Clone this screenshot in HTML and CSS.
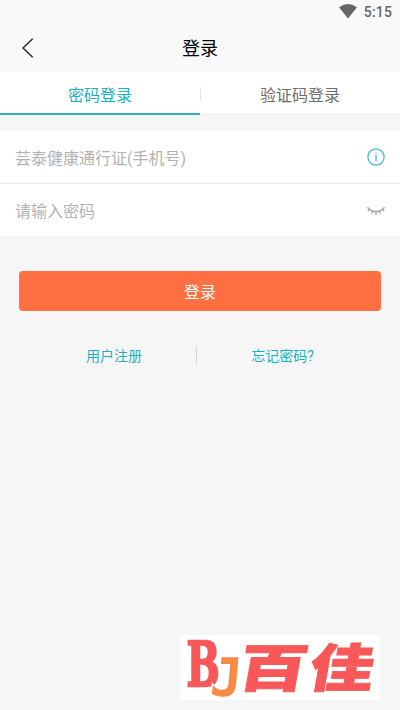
FILE: index.html
```html
<!DOCTYPE html>
<html lang="zh-CN">
<head>
<meta charset="utf-8">
<meta name="viewport" content="width=device-width, initial-scale=1">
<title>登录</title>
<link rel="stylesheet" href="styles.css">
</head>
<body>
<div class="status">
  <svg class="wifi" width="18" height="15" viewBox="0 0 18 15"><path d="M0 3.3Q9-3.2 18 3.3L9 14.6Z"/></svg>
  <span>5:15</span>
</div>
<header class="header">
  <svg class="back" width="12" height="20" viewBox="0 0 12 20"><path d="M10.7.7 1 10l9.7 9.3"/></svg>
  <h1>登录</h1>
</header>
<nav class="tabs">
  <a class="tab active">密码登录</a>
  <a class="tab">验证码登录</a>
</nav>
<main>
  <form class="fields">
    <label class="field"><span>芸泰健康通行证(手机号)</span>
      <svg class="info" width="18" height="18" viewBox="0 0 18 18"><circle cx="9" cy="9" r="8.1"/><path d="M9 7v6M9 4.8v1.2"/></svg>
    </label>
    <label class="field"><span>请输入密码</span>
      <svg class="eye" width="18" height="10" viewBox="0 0 18 10"><path d="M.5 1.2C4.5 6.9 13.5 6.9 17.5 1.2M2.7 3.4.8 5M5.7 5.2 4.5 7.7M9 5.6v3.6M12.3 5.2l1.2 2.5M15.3 3.4 17.2 5"/></svg>
    </label>
  </form>
  <button class="submit" type="button">登录</button>
  <div class="links"><a>用户注册</a><i></i><a>忘记密码?</a></div>
</main>
<footer class="brand">
  <svg width="200" height="65" viewBox="0 0 200 65">
    <text class="mark-b" transform="translate(6.5 51) scale(.94 1.48)">B</text>
    <text class="mark-j" transform="translate(29 61) skewX(-5) scale(1.15 1.16)">J</text>
    <text class="word" transform="translate(56 52) skewX(-10) scale(1.14 .86)">百</text>
    <text class="word" transform="translate(127 52) skewX(-10) scale(1.07 .86)">佳</text>
  </svg>
</footer>
</body>
</html>
```
FILE: styles.css
```css
* { box-sizing: border-box; }
body {
  margin: 0;
  height: 710px;
  display: flex;
  flex-direction: column;
  background: #f6f6f6;
  font-family: Roboto, "Noto Sans CJK SC", sans-serif;
}
.status {
  height: 24px;
  padding: 0 8px;
  display: flex;
  align-items: center;
  justify-content: flex-end;
  gap: 7px;
  background: #fafafa;
  color: #666;
  font-size: 14px;
  font-weight: 500;
  letter-spacing: .15px;
}
.wifi { fill: #666; margin-bottom: 2px; }
.header {
  height: 48px;
  display: grid;
  grid-template-columns: 1fr auto 1fr;
  align-items: center;
  background: #fafafa;
}
.back { margin-left: 22px; fill: none; stroke: #222; stroke-width: 1.4; }
h1 { margin: 0; padding-top: 2px; font-size: 18px; line-height: 26px; font-weight: 400; color: #000; }
.tabs {
  height: 43px;
  display: flex;
  background: linear-gradient(#e5e5e5, #e5e5e5) 199.5px 15px / 1px 14px no-repeat #fff;
}
.tab {
  flex: 1;
  display: flex;
  align-items: center;
  justify-content: center;
  padding-top: 1px;
  border-bottom: 1px solid #ececec;
  font-size: 16px;
  color: #6e6e6e;
}
.tab.active { padding-top: 2px; border-bottom: 2px solid #33a9b9; color: #16b2c3; }
.fields { margin: 16px 0 0; background: #fff; }
.field {
  height: 53px;
  padding: 0 15px;
  display: flex;
  align-items: center;
  justify-content: space-between;
  font-size: 16px;
  color: #b2b2b2;
}
.field span { padding-bottom: 1px; }
.field:first-child { border-bottom: 1px solid #e9e9e9; }
.field:last-child { height: 52px; padding-top: 1px; }
.info { fill: none; stroke: #3bbdcc; stroke-width: 1.3; }
.eye { fill: none; stroke: #a7a7a7; stroke-width: 1.4; }
.submit {
  display: block;
  width: 362px;
  height: 40px;
  margin: 35px auto 0;
  padding: 0 0 1px;
  border: 0;
  border-radius: 4px;
  background: #ff6f42;
  color: #fff;
  font: inherit;
  font-size: 16px;
}
.links {
  margin: 35px 32px 0;
  height: 19px;
  display: grid;
  grid-template-columns: 164px 1px 171px;
  grid-template-rows: 19px;
  align-items: center;
  font-size: 14px;
  line-height: 18px;
  color: #16b2c3;
}
.links a { text-align: center; padding-top: 1px; }
.links i { height: 19px; background: #d7d7d7; }
.brand { width: 200px; height: 65px; margin: auto 20px 10px auto; background: #fff; }
.brand svg { display: block; overflow: visible; }
.brand text { font-weight: 900; }
.mark-b { font-family: "DejaVu Serif", serif; font-size: 42px; fill: #f85858; stroke: #f85858; stroke-width: 1.6px; }
.mark-j { font-family: "DejaVu Sans Mono", monospace; font-size: 46px; fill: #f78b45; stroke: #fff; stroke-width: 2px; paint-order: stroke; }
.word { font-family: "Noto Sans CJK SC", sans-serif; font-size: 60px; fill: #f85858; stroke: #f85858; stroke-width: 1px; }
```
